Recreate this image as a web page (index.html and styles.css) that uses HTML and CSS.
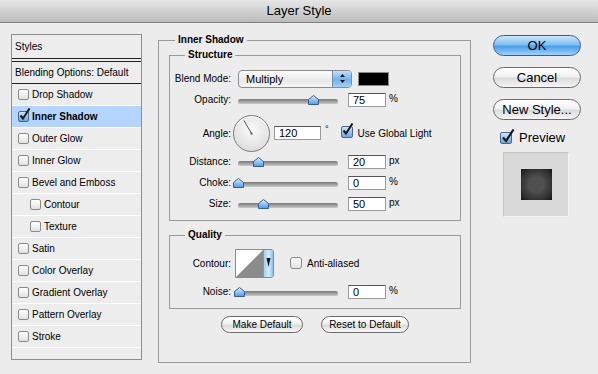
FILE: index.html
```html
<!DOCTYPE html>
<html>

	<head>
		<meta charset="UTF-8">
		<title>Layer Style</title>
		<link rel="stylesheet" href="styles.css">
	</head>

	<body>
		<div class="window">
			<div class="titlebar">Layer Style</div>
			<div class="content">
				<!-- 左侧样式列表 -->
				<div class="stylelist">
					<div class="item head">Styles</div>
					<div class="item blend">Blending Options: Default</div>
					<div class="item"><span class="chk"></span>Drop Shadow</div>
					<div class="item on"><span class="chk checked"><svg width="14" height="14" viewBox="0 0 14 14"><path d="M2.5 7.5 L5 10.5 L11.5 0.5" fill="none" stroke="#1a1a1a" stroke-width="2"/></svg></span><b>Inner Shadow</b></div>
					<div class="item"><span class="chk"></span>Outer Glow</div>
					<div class="item"><span class="chk"></span>Inner Glow</div>
					<div class="item"><span class="chk"></span>Bevel and Emboss</div>
					<div class="item sub"><span class="chk"></span>Contour</div>
					<div class="item sub"><span class="chk"></span>Texture</div>
					<div class="item"><span class="chk"></span>Satin</div>
					<div class="item"><span class="chk"></span>Color Overlay</div>
					<div class="item"><span class="chk"></span>Gradient Overlay</div>
					<div class="item"><span class="chk"></span>Pattern Overlay</div>
					<div class="item"><span class="chk"></span>Stroke</div>
				</div>

				<!-- 中间设置 -->
				<fieldset class="outer">
					<legend>Inner Shadow</legend>
					<fieldset class="group">
						<legend>Structure</legend>
						<div class="row">
							<span class="lbl">Blend Mode:</span>
							<div class="select">
								<span class="seltxt">Multiply</span>
								<span class="selbtn"><svg width="7" height="11" viewBox="0 0 7 11"><path d="M3.5 1 L6 4 H1 Z M3.5 10 L6 7 H1 Z" fill="#111"/></svg></span>
							</div>
							<span class="swatch"></span>
						</div>
						<div class="row">
							<span class="lbl">Opacity:</span>
							<div class="slider"><span class="track"></span><span class="thumb" style="left:75px"></span></div>
							<span class="num">75</span><span class="unit">%</span>
						</div>
						<div class="row angle">
							<span class="lbl">Angle:</span>
							<span class="dial"><svg width="37" height="37" viewBox="0 0 37 37"><line x1="18.5" y1="18.5" x2="11" y2="5.5" stroke="#555" stroke-width="1"/><rect x="17.5" y="17.5" width="2" height="2" fill="#555"/></svg></span>
							<span class="num wide">120</span><span class="deg">°</span>
							<span class="chk checked gl"><svg width="14" height="14" viewBox="0 0 14 14"><path d="M2.5 7.5 L5 10.5 L11.5 0.5" fill="none" stroke="#1a1a1a" stroke-width="2"/></svg></span>
							<span class="chklbl">Use Global Light</span>
						</div>
						<div class="row">
							<span class="lbl">Distance:</span>
							<div class="slider"><span class="track"></span><span class="thumb" style="left:20px"></span></div>
							<span class="num">20</span><span class="unit">px</span>
						</div>
						<div class="row">
							<span class="lbl">Choke:</span>
							<div class="slider"><span class="track"></span><span class="thumb" style="left:0px"></span></div>
							<span class="num">0</span><span class="unit">%</span>
						</div>
						<div class="row">
							<span class="lbl">Size:</span>
							<div class="slider"><span class="track"></span><span class="thumb" style="left:25px"></span></div>
							<span class="num">50</span><span class="unit">px</span>
						</div>
					</fieldset>

					<fieldset class="group quality">
						<legend>Quality</legend>
						<div class="row contourrow">
							<span class="lbl">Contour:</span>
							<span class="contour">
								<svg width="27" height="27" viewBox="0 0 27 27"><rect width="27" height="27" fill="#fff"/><path d="M0 27 L27 0 V27 Z" fill="#8c8c8c"/></svg>
								<span class="contbtn"><svg width="5" height="9" viewBox="0 0 5 9"><path d="M0.5 0 H4.5 L2.5 9 Z" fill="#111"/></svg></span>
							</span>
							<span class="chk aa"></span>
							<span class="chklbl">Anti-aliased</span>
						</div>
						<div class="row">
							<span class="lbl">Noise:</span>
							<div class="slider"><span class="track"></span><span class="thumb" style="left:1px"></span></div>
							<span class="num">0</span><span class="unit">%</span>
						</div>
					</fieldset>

					<div class="btnrow">
						<span class="btn small w82">Make Default</span>
						<span class="btn small w88">Reset to Default</span>
					</div>
				</fieldset>

				<!-- 右侧按钮 -->
				<div class="side">
					<span class="btn big ok">OK</span>
					<span class="btn big">Cancel</span>
					<span class="btn big">New Style...</span>
					<div class="preview">
						<span class="chk checked big"><svg width="16" height="16" viewBox="0 0 16 16"><path d="M3 8.5 L6 12 L13.5 0.5" fill="none" stroke="#1a1a1a" stroke-width="2.2"/></svg></span>
						<span>Preview</span>
					</div>
					<div class="pvbox"><span class="pvsq"></span></div>
				</div>
			</div>
		</div>
	</body>

</html>
```

FILE: styles.css
```css
* {
	box-sizing: border-box;
}

body {
	margin: 0;
	font-family: "Liberation Sans", Arial, sans-serif;
	font-size: 10px;
	color: #000;
	background: #ececec;
}

.window {
	width: 598px;
	height: 374px;
	background: #ececec;
	overflow: hidden;
}

.titlebar {
	height: 23px;
	line-height: 22px;
	text-align: center;
	font-size: 13px;
	background: linear-gradient(#e6e6e6, #bcbcbc);
	border-bottom: 1px solid #7d7d7d;
}

.content {
	display: flex;
	align-items: flex-start;
	padding: 11px 0 0 11px;
}

/* 左侧列表 */
.stylelist {
	width: 131px;
	height: 326px;
	border: 1px solid #8e8e8e;
	background: #ededed;
}

.item {
	height: 22px;
	display: flex;
	align-items: center;
	padding-left: 6px;
	border-bottom: 1px solid #fff;
}

.item.head {
	height: 24px;
	padding-left: 3px;
	border-bottom: 1px solid #222;
}

.item.blend {
	margin-top: 2px;
	height: 23px;
	padding-left: 3px;
	border-top: 1px solid #222;
	border-bottom: 1px solid #222;
}

.item.on {
	background: #b5d5ff;
}

.item.sub {
	padding-left: 18px;
}

.chk {
	position: relative;
	width: 11px;
	height: 11px;
	margin-right: 3px;
	border: 1px solid #8a8a8a;
	border-radius: 2px;
	background: linear-gradient(#fff, #e2e2e2);
	flex: none;
}

.chk.checked {
	border-color: #4a6690;
	background: linear-gradient(#cfe6fb, #6aa6e2);
}

.chk svg {
	position: absolute;
	left: -1px;
	top: -4px;
}

.chk.big {
	width: 12px;
	height: 12px;
}

/* 中间分组 */
fieldset {
	margin: 0;
	min-width: 0;
	border: 1px solid #9a9a9a;
}

legend {
	font-weight: bold;
	font-size: 10px;
	line-height: 12px;
	padding: 0 3px;
}

.outer {
	width: 313px;
	height: 329px;
	margin-left: 16px;
	padding: 3px 9px 0 10px;
}

.outer > legend {
	margin-left: 6px;
}

.group {
	padding: 7px 0 6px 0;
}

.group > legend {
	margin-left: 15px;
}

.quality {
	margin-top: 8px;
	padding-top: 8px;
}

.row {
	display: flex;
	align-items: center;
	height: 21px;
}

.row.angle {
	height: 36px;
	margin-top: 5px;
}

.row.contourrow {
	height: 29px;
	margin-bottom: 3px;
}

.lbl {
	width: 61px;
	text-align: right;
	flex: none;
}

.select {
	display: flex;
	width: 114px;
	height: 18px;
	margin-left: 7px;
	border: 1px solid #8a8a8a;
	border-radius: 4px;
	background: linear-gradient(#fdfdfd, #e9e9e9 60%, #f5f5f5);
	overflow: hidden;
}

.seltxt {
	flex: 1;
	padding-left: 7px;
	line-height: 16px;
	font-size: 11px;
}

.selbtn {
	width: 19px;
	display: flex;
	align-items: center;
	justify-content: center;
	background: linear-gradient(#bfe0fb, #6fb2ee 55%, #a5d2f8);
	border-left: 1px solid #6f8db8;
}

.swatch {
	width: 31px;
	height: 14px;
	margin-left: 6px;
	background: #000;
	border: 1px solid #8a8a8a;
}

.slider {
	position: relative;
	width: 100px;
	height: 12px;
	margin-left: 7px;
}

.track {
	position: absolute;
	left: 0;
	right: 0;
	top: 5px;
	height: 5px;
	border-radius: 3px;
	background: linear-gradient(#777, #a8a8a8 60%, #c8c8c8);
}

.thumb {
	position: absolute;
	top: 1px;
	width: 11px;
	height: 10px;
	margin-left: -5px;
	background: url("data:image/svg+xml;utf8,<svg xmlns='http://www.w3.org/2000/svg' width='11' height='10'><defs><linearGradient id='g' x1='0' y1='0' x2='0' y2='1'><stop offset='0' stop-color='%23dcefff'/><stop offset='1' stop-color='%234e9ae6'/></linearGradient></defs><path d='M5.5 0.5 L10.5 4.5 V9.5 H0.5 V4.5 Z' fill='url(%23g)' stroke='%23395e92'/></svg>");
}

.num {
	width: 38px;
	height: 14px;
	margin-left: 10px;
	padding-left: 4px;
	line-height: 12px;
	font-size: 11px;
	background: #fff;
	border: 1px solid #9a9a9a;
	border-top-color: #555;
}

.num.wide {
	width: 47px;
	margin-left: 4px;
}

.unit {
	margin-left: 3px;
	align-self: flex-start;
	margin-top: 4px;
}

.dial {
	width: 37px;
	height: 37px;
	margin-left: 2px;
	border: 1px solid #7a7a7a;
	border-radius: 50%;
	background: radial-gradient(circle at 50% 40%, #fbfbfb, #e4e4e4 60%, #cfcfcf);
	box-shadow: inset 0 1px 2px #fff;
	position: relative;
}

.dial svg {
	position: absolute;
	left: -1px;
	top: -1px;
}

.deg {
	margin-left: 4px;
	align-self: flex-start;
	margin-top: 9px;
	font-size: 9px;
}

.chk.gl {
	width: 12px;
	height: 12px;
	margin-left: 12px;
	margin-right: 5px;
	margin-top: -3px;
}

.chklbl {
	font-size: 10px;
}

.contour {
	display: flex;
	width: 39px;
	height: 29px;
	margin-left: 4px;
	border: 1px solid #8a8a8a;
	border-radius: 0 3px 3px 0;
	overflow: hidden;
}

.contbtn {
	flex: 1;
	display: flex;
	align-items: flex-start;
	justify-content: center;
	padding-top: 8px;
	background: linear-gradient(90deg, #9fcff7, #d4ebfd 50%, #8cc3f2);
	border-left: 1px solid #7a9ac4;
}

.chk.aa {
	width: 12px;
	height: 12px;
	margin-left: 16px;
	margin-right: 5px;
	margin-top: -2px;
	border-radius: 3px;
}

.btnrow {
	display: flex;
	justify-content: center;
	gap: 18px;
	margin-top: 7px;
}

.btn {
	display: flex;
	align-items: center;
	justify-content: center;
	border: 1px solid #6a6a6a;
	background: linear-gradient(#ffffff, #f1f1f1 45%, #dcdcdc 55%, #f6f6f6);
	white-space: nowrap;
}

.btn.small {
	height: 17px;
	border-radius: 9px;
	font-size: 10px;
}

.w82 {
	width: 82px;
}

.w88 {
	width: 88px;
}

/* 右侧 */
.side {
	display: flex;
	flex-direction: column;
	width: 88px;
	margin-left: 22px;
	margin-top: 1px;
}

.btn.big {
	height: 21px;
	margin-bottom: 11px;
	border-radius: 11px;
	font-size: 13px;
}

.btn.ok {
	border-color: #3d5b92;
	background: linear-gradient(#cde6fb, #7fbff2 45%, #4d9de6 55%, #9fd2fa);
}

.preview {
	display: flex;
	align-items: center;
	gap: 4px;
	margin: -1px 0 0 7px;
	font-size: 13px;
}

.pvbox {
	display: flex;
	align-items: center;
	justify-content: center;
	width: 66px;
	height: 65px;
	margin: 7px 0 0 10px;
	background: #d9d9d9;
	border: 1px solid #f4f4f4;
	border-top-color: #c4c4c4;
	border-left-color: #c4c4c4;
}

.pvsq {
	width: 31px;
	height: 31px;
	background: radial-gradient(circle, #4f4f4f 35%, #333 70%, #161616);
}
```
